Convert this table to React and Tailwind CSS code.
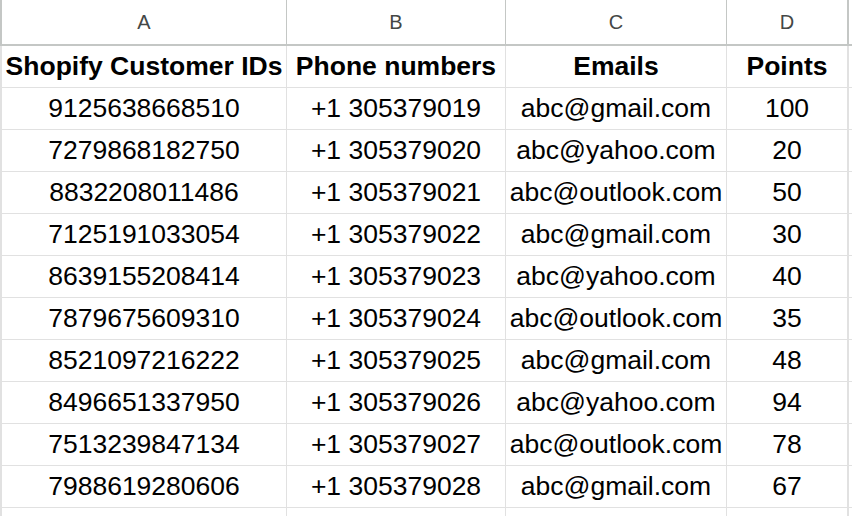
const COLUMNS = ['A', 'B', 'C', 'D'];
const HEADERS = ['Shopify Customer IDs', 'Phone numbers', 'Emails', 'Points'];

const ROWS = [
  ['9125638668510', '+1 305379019', 'abc@gmail.com', '100'],
  ['7279868182750', '+1 305379020', 'abc@yahoo.com', '20'],
  ['8832208011486', '+1 305379021', 'abc@outlook.com', '50'],
  ['7125191033054', '+1 305379022', 'abc@gmail.com', '30'],
  ['8639155208414', '+1 305379023', 'abc@yahoo.com', '40'],
  ['7879675609310', '+1 305379024', 'abc@outlook.com', '35'],
  ['8521097216222', '+1 305379025', 'abc@gmail.com', '48'],
  ['8496651337950', '+1 305379026', 'abc@yahoo.com', '94'],
  ['7513239847134', '+1 305379027', 'abc@outlook.com', '78'],
  ['7988619280606', '+1 305379028', 'abc@gmail.com', '67'],
];

const GRID = 'grid grid-cols-[285px_219px_221px_122px]';

export default function App() {
  return (
    <div className="w-[852px] h-[516px] overflow-hidden bg-white font-['Liberation_Sans',Arial,sans-serif]">
      {/* Column letters */}
      <div className={`${GRID} h-[46px] border-l-2 border-b-2 border-[#c4c7c5]`}>
        {COLUMNS.map((c, i) => (
          <div
            key={c}
            className={`flex items-center justify-center text-[20px] text-[#444746] border-[#c4c7c5] ${
              i === 3 ? 'border-r-2' : 'border-r'
            }`}
          >
            {c}
          </div>
        ))}
      </div>

      {/* Header row */}
      <div className={`${GRID} h-[42px] border-l-2 border-b border-[#e1e1e1]`}>
        {HEADERS.map((h, i) => (
          <div
            key={h}
            className={`flex items-center justify-center text-[26.5px] font-bold text-black whitespace-nowrap border-[#e1e1e1] ${
              i === 3 ? 'border-r-2' : 'border-r'
            }`}
          >
            {h}
          </div>
        ))}
      </div>

      {ROWS.map((row, r) => (
        <div key={r} className={`${GRID} h-[42px] border-l-2 border-b border-[#e1e1e1]`}>
          {row.map((v, i) => (
            <div
              key={i}
              className={`flex items-center justify-center text-[26.5px] text-black whitespace-nowrap border-[#e1e1e1] ${
                i === 3 ? 'border-r-2' : 'border-r'
              }`}
            >
              {v}
            </div>
          ))}
        </div>
      ))}

      <div className={`${GRID} h-[42px] border-l-2 border-[#e1e1e1]`}>
        {COLUMNS.map((c, i) => (
          <div key={c} className={`border-[#e1e1e1] ${i === 3 ? 'border-r-2' : 'border-r'}`} />
        ))}
      </div>
    </div>
  );
}
